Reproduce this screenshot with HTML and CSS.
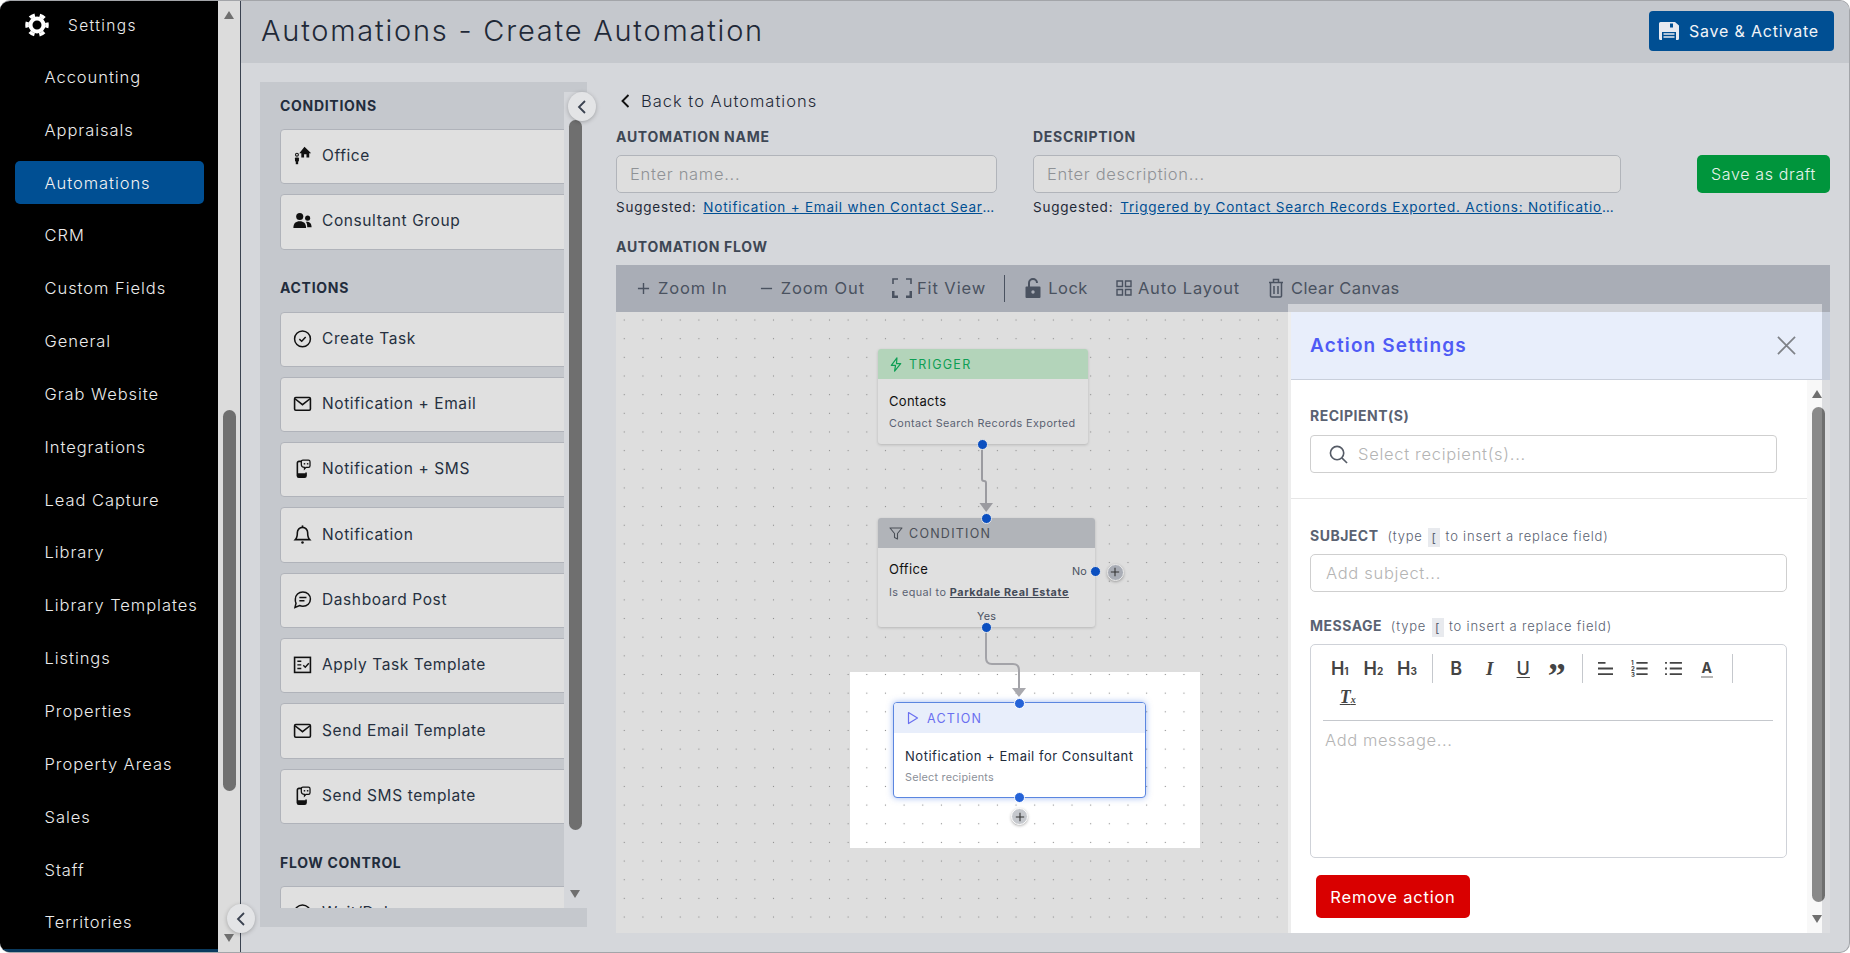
FILE: index.html
```html
<!DOCTYPE html>
<html lang="en">
<head>
    <meta charset="UTF-8">
    <meta name="viewport" content="width=device-width, initial-scale=1.0">
    <title>Automations - Create Automation</title>
    <link rel="stylesheet" href="styles.css">
</head>
<body>
    <svg class="defs" width="0" height="0">
        <symbol id="i-mail" viewBox="0 0 24 24"><rect x="2" y="4.500" width="20" height="16" rx="1.500" fill="none" stroke="currentColor" stroke-width="2"/><path d="M2.500 6l9.500 7.500L21.500 6" fill="none" stroke="currentColor" stroke-width="2"/></symbol>
        <symbol id="i-phone" viewBox="0 0 24 24"><path d="M11 3H7.500A2 2 0 0 0 5.500 5v16a2 2 0 0 0 2 2h7a2 2 0 0 0 2-2v-4" fill="none" stroke="currentColor" stroke-width="2"/><rect x="5.500" y="18" width="11" height="5" rx="1" fill="currentColor"/><path d="M12.500 1.500h7a2 2 0 0 1 2 2v5a2 2 0 0 1-2 2h-3l-2 2v-2a4 4 0 0 1-4-4v-3a2 2 0 0 1 2-2z" fill="none" stroke="currentColor" stroke-width="1.600"/><circle cx="14.500" cy="6" r="1.100" fill="currentColor"/><circle cx="18.500" cy="6" r="1.100" fill="currentColor"/></symbol>
        <symbol id="i-plus-sm" viewBox="0 0 12 12"><path d="M6 1v10M1 6h10" stroke="currentColor" stroke-width="1.300" fill="none"/></symbol>
    </svg>

    <div class="app">
        <!-- Sidebar -->
        <nav class="sidebar">
            <div class="nav-item nav-settings">
                <svg class="gear" viewBox="0 0 24 24"><circle cx="12" cy="12" r="6.500" fill="none" stroke="#fff" stroke-width="4"/><circle cx="12" cy="12" r="10" fill="none" stroke="#fff" stroke-width="3.500" stroke-dasharray="5.500 4.970" stroke-dashoffset="2.750"/></svg>
                <span>Settings</span>
            </div>
            <a class="nav-item">Accounting</a>
            <a class="nav-item">Appraisals</a>
            <a class="nav-item active">Automations</a>
            <a class="nav-item">CRM</a>
            <a class="nav-item">Custom Fields</a>
            <a class="nav-item">General</a>
            <a class="nav-item">Grab Website</a>
            <a class="nav-item">Integrations</a>
            <a class="nav-item">Lead Capture</a>
            <a class="nav-item">Library</a>
            <a class="nav-item">Library Templates</a>
            <a class="nav-item">Listings</a>
            <a class="nav-item">Properties</a>
            <a class="nav-item">Property Areas</a>
            <a class="nav-item">Sales</a>
            <a class="nav-item">Staff</a>
            <a class="nav-item">Territories</a>
            <div class="sidebar-foot"></div>
        </nav>
        <div class="side-track">
            <span class="arrow-up"></span>
            <span class="side-thumb"></span>
            <span class="arrow-down"></span>
            <button class="collapse-btn side-collapse"><svg viewBox="0 0 12 16"><path d="M9 2L3 8l6 6" fill="none" stroke="#3a4250" stroke-width="1.800"/></svg></button>
        </div>

        <main class="main">
            <header class="page-header">
                <h1>Automations - Create Automation</h1>
                <button class="btn-save">
                    <svg viewBox="0 0 20 18"><path d="M1.500 0H16l4 3.500v13a1.500 1.500 0 0 1-1.500 1.500h-17A1.500 1.500 0 0 1 0 16.500v-15A1.500 1.500 0 0 1 1.500 0z" fill="#e8eaf0"/><rect x="11" y="1.500" width="3" height="4" fill="#004f93"/><path d="M3 10h14v8H3z" fill="#004f93"/><path d="M4.500 12h11M4.500 15h11" stroke="#e8eaf0" stroke-width="1.300"/></svg>
                    Save &amp; Activate
                </button>
            </header>

            <div class="page-body">
                <!-- Step palette -->
                <aside class="palette">
                    <div class="palette-scroll">
                        <h3 class="palette-title first">CONDITIONS</h3>
                        <div class="step-card">
                            <svg class="step-icon" viewBox="0 0 24 24"><path d="M14.500 1L23 9h-2.500v5.500h-3.500v-4h-3v4h-3.500V9H8z" fill="currentColor"/><circle cx="5" cy="11" r="1.800" fill="none" stroke="currentColor" stroke-width="1.400"/><rect x="2.500" y="14.500" width="5" height="5" rx="1" fill="currentColor"/><rect x="3.500" y="19" width="3" height="4" fill="currentColor"/></svg>
                            Office
                        </div>
                        <div class="step-card">
                            <svg class="step-icon" viewBox="0 0 24 24"><circle cx="8.500" cy="7" r="4.500" fill="currentColor"/><path d="M0.500 21.500c0-6 3-8.500 8-8.500s8 2.500 8 8.500z" fill="currentColor"/><circle cx="18.500" cy="9" r="3.200" fill="currentColor"/><path d="M17 13.500c4 0 6.500 2 6.500 7h-5.500c0-3-.5-5-1.800-6.800z" fill="currentColor"/></svg>
                            Consultant Group
                        </div>

                        <h3 class="palette-title">ACTIONS</h3>
                        <div class="step-card">
                            <svg class="step-icon" viewBox="0 0 24 24"><circle cx="12" cy="12.500" r="10" fill="none" stroke="currentColor" stroke-width="1.900"/><path d="M8 12.800l3 2.700 5-5.500" fill="none" stroke="currentColor" stroke-width="1.800"/></svg>
                            Create Task
                        </div>
                        <div class="step-card">
                            <svg class="step-icon"><use href="#i-mail"/></svg>
                            Notification + Email
                        </div>
                        <div class="step-card">
                            <svg class="step-icon"><use href="#i-phone"/></svg>
                            Notification + SMS
                        </div>
                        <div class="step-card">
                            <svg class="step-icon" viewBox="0 0 24 24"><path d="M12 3a6.500 6.500 0 0 0-6.500 6.500c0 5-1 7.500-2.500 9h18c-1.500-1.500-2.500-4-2.500-9A6.500 6.500 0 0 0 12 3z" fill="none" stroke="currentColor" stroke-width="2"/><path d="M12 .5v2.500" stroke="currentColor" stroke-width="2"/><circle cx="12" cy="22" r="1.600" fill="currentColor"/></svg>
                            Notification
                        </div>
                        <div class="step-card">
                            <svg class="step-icon" viewBox="0 0 24 24"><path d="M12.500 2.500c5.500 0 9.500 3.800 9.500 9s-4 9-9.500 9c-1.500 0-3-.3-4.200-.9L2.500 22l1.300-5.200A8.800 8.800 0 0 1 3 11.500c0-5.200 4-9 9.500-9z" fill="none" stroke="currentColor" stroke-width="1.900"/><path d="M8 9.500h9M8 13.500h6.500" stroke="currentColor" stroke-width="1.800"/></svg>
                            Dashboard Post
                        </div>
                        <div class="step-card">
                            <svg class="step-icon" viewBox="0 0 24 24"><rect x="2" y="3" width="20" height="19" fill="none" stroke="currentColor" stroke-width="2"/><path d="M5.500 8h5M5.500 12.500h5M5.500 17h5" stroke="currentColor" stroke-width="1.800"/><path d="M13 13l2.500 2.500 4.500-5" fill="none" stroke="currentColor" stroke-width="1.800"/></svg>
                            Apply Task Template
                        </div>
                        <div class="step-card">
                            <svg class="step-icon"><use href="#i-mail"/></svg>
                            Send Email Template
                        </div>
                        <div class="step-card">
                            <svg class="step-icon"><use href="#i-phone"/></svg>
                            Send SMS template
                        </div>

                        <h3 class="palette-title last">FLOW CONTROL</h3>
                        <div class="step-card">
                            <svg class="step-icon" viewBox="0 0 24 24"><circle cx="12" cy="12.500" r="10" fill="none" stroke="currentColor" stroke-width="1.900"/><path d="M12 7v6l4 2" fill="none" stroke="currentColor" stroke-width="1.800"/></svg>
                            Wait/Delay
                        </div>
                    </div>
                    <div class="palette-bar">
                        <span class="palette-thumb"></span>
                        <span class="arrow-down"></span>
                    </div>
                    <button class="collapse-btn palette-collapse"><svg viewBox="0 0 12 16"><path d="M9 2L3 8l6 6" fill="none" stroke="#3a4250" stroke-width="1.800"/></svg></button>
                </aside>

                <section class="builder">
                    <a class="back-link">
                        <svg viewBox="0 0 10 16"><path d="M8.500 2L2.500 8l6 6" fill="none" stroke="#111" stroke-width="1.900"/></svg>
                        Back to Automations
                    </a>

                    <div class="form-row">
                        <div class="field">
                            <label class="field-label">AUTOMATION NAME</label>
                            <input class="field-input" placeholder="Enter name...">
                            <div class="suggest"><span>Suggested:</span><a>Notification + Email when Contact Search Records Exported</a></div>
                        </div>
                        <div class="field">
                            <label class="field-label">DESCRIPTION</label>
                            <input class="field-input" placeholder="Enter description...">
                            <div class="suggest"><span>Suggested:</span><a>Triggered by Contact Search Records Exported. Actions: Notification + Email for Consultant</a></div>
                        </div>
                        <button class="btn-draft">Save as draft</button>
                    </div>

                    <label class="field-label flow-label">AUTOMATION FLOW</label>

                    <div class="flow">
                        <div class="flow-tools">
                            <span class="tool tool-zoomin"><svg viewBox="0 0 14 14"><path d="M7 1v12M1 7h12" fill="none" stroke="currentColor" stroke-width="1.500"/></svg>Zoom In</span>
                            <span class="tool tool-zoomout"><svg viewBox="0 0 14 14"><path d="M1 7h12" fill="none" stroke="currentColor" stroke-width="1.500"/></svg>Zoom Out</span>
                            <span class="tool tool-fit"><svg viewBox="0 0 20 20"><path d="M1 6V1h5M14 1h5v5" fill="none" stroke="currentColor" stroke-width="1.600"/><path d="M1 13v6h5M14 19h5v-6" fill="none" stroke="currentColor" stroke-width="3"/></svg>Fit View</span>
                            <span class="tool-sep"></span>
                            <span class="tool tool-lock"><svg viewBox="0 0 16 20"><path d="M4 9V5a4 4 0 0 1 8 0" fill="none" stroke="currentColor" stroke-width="2"/><path d="M1.500 8.500h13a1 1 0 0 1 1 1V19a1 1 0 0 1-1 1h-13a1 1 0 0 1-1-1V9.500a1 1 0 0 1 1-1z" fill="currentColor"/><circle cx="8" cy="14" r="1.700" fill="#a9adb6"/></svg>Lock</span>
                            <span class="tool tool-layout"><svg viewBox="0 0 16 16"><path d="M1 1h5.500v5.500H1zM9.500 1H15v5.500H9.500zM1 9.500h5.500V15H1zM9.500 9.500H15V15H9.500z" fill="none" stroke="currentColor" stroke-width="1.400"/></svg>Auto Layout</span>
                            <span class="tool tool-trash"><svg viewBox="0 0 16 20"><path d="M1 4.500h14M5.500 4.500V1.500h5v3M2.500 4.500V18a1.500 1.500 0 0 0 1.500 1h8a1.500 1.500 0 0 0 1.500-1V4.500M6 8v8M10 8v8" fill="none" stroke="currentColor" stroke-width="1.500"/></svg>Clear Canvas</span>
                        </div>

                        <div class="canvas">
                            <div class="node-glow"></div>
                            <div class="canvas-dots"></div>

                            <svg class="edges" width="1214" height="621">
                                <path d="M366 136V167Q366 169 368 169Q370 169 370 171V193" fill="none" stroke="#9b9ba0" stroke-width="2"/>
                                <path d="M363.500 191H377L370.200 200Z" fill="#9b9ba0"/>
                                <path d="M370 318V346Q370 352 376 352H397Q403 352 403 358V378" fill="none" stroke="#a3a3a8" stroke-width="2"/>
                                <path d="M396 376H410L403 385Z" fill="#a9a9ae"/>
                            </svg>

                            <div class="node node-trigger">
                                <div class="node-head">
                                    <svg viewBox="0 0 14 16"><path d="M8 1L2 9h4.500L5.500 15l6.500-8H7.500z" fill="none" stroke="currentColor" stroke-width="1.300" stroke-linejoin="round"/></svg>
                                    TRIGGER
                                </div>
                                <div class="node-body">
                                    <div class="node-title">Contacts</div>
                                    <div class="node-sub">Contact Search Records Exported</div>
                                </div>
                                <span class="handle handle-bottom"></span>
                            </div>

                            <div class="node node-condition">
                                <div class="node-head">
                                    <svg viewBox="0 0 14 14"><path d="M1 1.500h12L8.500 7v5.500L5.500 11V7z" fill="none" stroke="currentColor" stroke-width="1.100" stroke-linejoin="round"/></svg>
                                    CONDITION
                                </div>
                                <div class="node-body">
                                    <div class="node-title">Office</div>
                                    <div class="node-sub">Is equal to <a>Parkdale Real Estate</a></div>
                                </div>
                                <span class="node-tag tag-no">No</span>
                                <span class="node-tag tag-yes">Yes</span>
                                <span class="handle handle-top"></span>
                                <span class="handle handle-right"></span>
                                <span class="handle handle-bottom"></span>
                                <span class="add-btn add-right"><svg><use href="#i-plus-sm"/></svg></span>
                            </div>

                            <div class="node node-action">
                                <div class="node-head">
                                    <svg viewBox="0 0 12 14"><path d="M1.500 1.500L10.500 7l-9 5.500z" fill="none" stroke="currentColor" stroke-width="1.200" stroke-linejoin="round"/></svg>
                                    ACTION
                                </div>
                                <div class="node-body">
                                    <div class="node-title">Notification + Email for Consultant</div>
                                    <div class="node-sub">Select recipients</div>
                                </div>
                                <span class="handle handle-top"></span>
                                <span class="handle handle-bottom"></span>
                                <span class="add-btn add-below"><svg><use href="#i-plus-sm"/></svg></span>
                            </div>
                        </div>

                        <!-- Action settings drawer -->
                        <div class="drawer">
                            <div class="drawer-strip"></div>
                            <div class="drawer-head">
                                <h2>Action Settings</h2>
                                <svg class="drawer-close" viewBox="0 0 20 20"><path d="M1 1l18 18M19 1L1 19" fill="none" stroke="#7f8288" stroke-width="1.800"/></svg>
                            </div>
                            <div class="drawer-body">
                                <div class="drawer-section">
                                    <label class="drawer-label">RECIPIENT(S)</label>
                                    <div class="search-box">
                                        <svg viewBox="0 0 20 20"><circle cx="8.500" cy="8.500" r="7" fill="none" stroke="#555b66" stroke-width="1.700"/><path d="M13.500 13.500L19 19" stroke="#555b66" stroke-width="1.700"/></svg>
                                        <input placeholder="Select recipient(s)...">
                                    </div>
                                </div>
                                <div class="drawer-section">
                                    <label class="drawer-label">SUBJECT <span class="hint">(type <kbd>[</kbd> to insert a replace field)</span></label>
                                    <input class="drawer-input" placeholder="Add subject...">
                                    <label class="drawer-label message-label">MESSAGE <span class="hint">(type <kbd>[</kbd> to insert a replace field)</span></label>
                                    <div class="editor">
                                        <div class="editor-tools">
                                            <div class="tools-row">
                                                <span class="ql">H<sub>1</sub></span>
                                                <span class="ql">H<sub>2</sub></span>
                                                <span class="ql">H<sub>3</sub></span>
                                                <span class="ql-sep"></span>
                                                <span class="ql">B</span>
                                                <span class="ql ql-i">I</span>
                                                <span class="ql ql-u">U</span>
                                                <span class="ql ql-q">”</span>
                                                <span class="ql-sep"></span>
                                                <span class="ql"><svg viewBox="0 0 18 16"><path d="M1 2h8M1 8h16M1 14h16" stroke="currentColor" stroke-width="2"/></svg></span>
                                                <span class="ql ql-list"><small class="list-nums">1<br>2<br>3</small><svg viewBox="0 0 12 16"><path d="M0 2h12M0 8h12M0 14h12" stroke="currentColor" stroke-width="2"/></svg></span>
                                                <span class="ql"><svg viewBox="0 0 18 16"><path d="M5 2h13M5 8h13M5 14h13" stroke="currentColor" stroke-width="2"/><path d="M0 2h2M0 8h2M0 14h2" stroke="currentColor" stroke-width="2"/></svg></span>
                                                <span class="ql ql-a"><span class="ql-a-letter">A</span></span>
                                                <span class="ql-sep"></span>
                                            </div>
                                            <div class="tools-row tools-second">
                                                <span class="ql ql-clear">T<sub>x</sub></span>
                                            </div>
                                        </div>
                                        <div class="editor-area">Add message...</div>
                                    </div>
                                    <button class="btn-remove">Remove action</button>
                                </div>
                            </div>
                            <div class="drawer-bar">
                                <span class="arrow-up"></span>
                                <span class="drawer-thumb"></span>
                                <span class="arrow-down"></span>
                            </div>
                        </div>
                    </div>
                </section>
            </div>
        </main>
    </div>
</body>
</html>
```

FILE: styles.css
```css
* {
    margin: 0;
    padding: 0;
    box-sizing: border-box;
}

html, body {
    width: 1850px;
    height: 953px;
    overflow: hidden;
    background: #fff;
}

body {
    font-family: Inter, "Noto Sans", sans-serif;
    color: #222c3c;
}

.defs {
    position: absolute;
}

.app {
    width: 1850px;
    height: 953px;
    display: flex;
    border: 1px solid #a3a5a9;
    border-left-width: 0;
    border-radius: 10px;
    overflow: hidden;
    background: #d5d7db;
}

/* Sidebar */
.sidebar {
    width: 218px;
    flex: none;
    background: #000;
    display: flex;
    flex-direction: column;
    gap: 10px;
    padding: 1.600px 14px 0 15px;
    position: relative;
}

.nav-item {
    height: 42.850px;
    flex: none;
    display: flex;
    align-items: center;
    padding-left: 29.500px;
    color: #ececec;
    font-size: 16.500px;
    font-weight: 300;
    letter-spacing: 0.950px;
    border-radius: 5px;
}

.nav-item.active {
    background: #004f93;
    color: #f2f2f2;
}

.nav-settings {
    padding: 2px 0 0 10px;
    gap: 19px;
    font-size: 15.500px;
    letter-spacing: 1.400px;
}

.gear {
    width: 24px;
    height: 24px;
}

.sidebar-foot {
    position: absolute;
    left: 0;
    right: 0;
    bottom: 0;
    height: 3px;
    background: #0a3a5e;
}

.side-track {
    width: 23px;
    flex: none;
    background: #dcdcdc;
    border-right: 1px solid #3a4250;
    position: relative;
}

.side-thumb {
    position: absolute;
    left: 5px;
    top: 409px;
    width: 13px;
    height: 381px;
    background: #6f6f6f;
    border-radius: 7px;
}

.arrow-up,
.arrow-down {
    position: absolute;
    width: 0;
    height: 0;
    border-left: 5.500px solid transparent;
    border-right: 5.500px solid transparent;
}

.arrow-up {
    border-bottom: 8px solid #6f6f6f;
}

.arrow-down {
    border-top: 8px solid #6f6f6f;
}

.side-track .arrow-up {
    left: 6px;
    top: 10px;
}

.side-track .arrow-down {
    left: 6px;
    top: 933px;
}

.collapse-btn {
    position: absolute;
    width: 28px;
    height: 29px;
    border: none;
    border-radius: 50%;
    background: #e3e4e6;
    box-shadow: 0 1px 4px rgba(0, 0, 0, 0.25);
    display: flex;
    align-items: center;
    justify-content: center;
    z-index: 3;
}

.collapse-btn svg {
    width: 12px;
    height: 16px;
}

.side-collapse {
    left: 9px;
    top: 903px;
}

/* Main */
.main {
    flex: 1;
    display: flex;
    flex-direction: column;
    min-width: 0;
}

.page-header {
    height: 62px;
    flex: none;
    background: #c5c8cd;
    display: flex;
    align-items: center;
    justify-content: space-between;
    padding: 0 15px 2px 20px;
}

.page-header h1 {
    font-size: 29px;
    font-weight: 300;
    letter-spacing: 1.770px;
    color: #1f2937;
    padding-bottom: 2px;
}

.btn-save {
    width: 185px;
    height: 40px;
    border: none;
    border-radius: 4px;
    background: #004f93;
    color: #f2f4f8;
    font: 400 16px Inter, sans-serif;
    letter-spacing: 0.800px;
    display: flex;
    align-items: center;
    gap: 10px;
    padding-left: 10px;
}

.btn-save svg {
    width: 20px;
    height: 18px;
}

.page-body {
    flex: 1;
    display: flex;
    padding-left: 19px;
    min-height: 0;
}

/* Step palette */
.palette {
    width: 327px;
    height: 845px;
    margin-top: 19px;
    flex: none;
    background: #c5c8cd;
    position: relative;
    display: flex;
    align-items: flex-start;
}

.palette-scroll {
    width: 304px;
    height: 826px;
    overflow: hidden;
    padding-left: 20px;
    flex: none;
}

.palette-title {
    font-size: 14px;
    font-weight: 700;
    letter-spacing: 0.700px;
    color: #222c3c;
    line-height: 18px;
    margin: 29px 0 15px;
}

.palette-title.first {
    margin: 15px 0 14px;
}

.palette-title.last {
    margin: 30px 0 14px;
}

.step-card {
    width: 300px;
    height: 55.300px;
    margin-bottom: 10px;
    background: #e0e0e0;
    border: 1px solid #b0b3ba;
    border-radius: 4px;
    display: flex;
    align-items: center;
    gap: 10px;
    padding: 0 0 2px 12px;
    font-size: 15.500px;
    font-weight: 400;
    letter-spacing: 0.600px;
    color: #26303f;
}

.step-icon {
    width: 19px;
    height: 19px;
    flex: none;
    color: #111;
}

.palette-bar {
    width: 23px;
    height: 816px;
    margin-top: 10px;
    background: #d5d7db;
    position: relative;
}

.palette-thumb {
    position: absolute;
    left: 5px;
    top: 28px;
    width: 13px;
    height: 710px;
    background: #6f6f6f;
    border-radius: 7px;
}

.palette-bar .arrow-down {
    left: 6px;
    top: 798px;
}

.palette-collapse {
    left: 308px;
    top: 10px;
}

/* Builder column */
.builder {
    width: 1214px;
    margin-left: 29px;
    flex: none;
    display: flex;
    flex-direction: column;
}

.back-link {
    height: 24px;
    margin-top: 26px;
    display: flex;
    align-items: center;
    gap: 11px;
    padding-left: 4px;
    font-size: 16.500px;
    font-weight: 300;
    letter-spacing: 1px;
    color: #1f2937;
}

.back-link svg {
    width: 10px;
    height: 16px;
}

.form-row {
    display: grid;
    grid-template-columns: 381px 588px 133px;
    column-gap: 36px;
    margin-top: 15px;
}

.field {
    min-width: 0;
}

.field-label {
    display: block;
    font-size: 14px;
    font-weight: 700;
    line-height: 18px;
    letter-spacing: 0.700px;
    color: #3e4755;
}

.field-input {
    display: block;
    width: 100%;
    height: 38px;
    margin-top: 9px;
    padding: 0 13px;
    background: #dedede;
    border: 1px solid #b1b4ba;
    border-radius: 5px;
    font: 300 16.500px Inter, sans-serif;
    letter-spacing: 0.700px;
}

.field-input::placeholder {
    color: #8f9296;
}

.suggest {
    height: 18px;
    margin-top: 5px;
    display: flex;
    align-items: center;
    gap: 7px;
    font-size: 13.500px;
    font-weight: 400;
    letter-spacing: 0.780px;
    color: #1f2937;
    white-space: nowrap;
}

.suggest a {
    flex: 1;
    min-width: 0;
    overflow: hidden;
    text-overflow: ellipsis;
    color: #004f93;
    text-decoration: underline;
}

.btn-draft {
    width: 133px;
    height: 38px;
    margin: 27px 0 0 40px;
    border: none;
    border-radius: 5px;
    background: #00953c;
    color: #e8f4ec;
    font: 300 16px Inter, sans-serif;
    letter-spacing: 0.650px;
}

.flow-label {
    margin-top: 22px;
}

.flow {
    margin-top: 9px;
    position: relative;
    display: flex;
    flex-direction: column;
}

.flow-tools {
    height: 47px;
    background: #a9adb6;
    position: relative;
    color: #4a5260;
    font-size: 16.500px;
    font-weight: 400;
    letter-spacing: 0.900px;
    display: flex;
    align-items: center;
    padding: 0 0 1px 21px;
}

.tool {
    display: flex;
    align-items: center;
}

.tool svg {
    flex: none;
}

.tool-zoomin { gap: 8px; }
.tool-zoomin svg { width: 13px; height: 13px; }

.tool-zoomout { gap: 8px; margin-left: 32px; }
.tool-zoomout svg { width: 13px; height: 13px; }

.tool-fit { gap: 5px; margin-left: 27px; }
.tool-fit svg { width: 20px; height: 20px; }

.tool-sep {
    width: 1px;
    height: 27px;
    background: #4a5260;
    margin-left: 18px;
}

.tool-lock { gap: 7px; margin-left: 20px; letter-spacing: 0.500px; }
.tool-lock svg { width: 16px; height: 20px; }

.tool-layout { gap: 6px; margin-left: 28px; letter-spacing: 0.800px; }
.tool-layout svg { width: 16px; height: 16px; }

.tool-trash { gap: 7px; margin-left: 28px; letter-spacing: 0.400px; }
.tool-trash svg { width: 16px; height: 20px; }

/* Canvas */
.canvas {
    height: 621px;
    background: #dedede;
    position: relative;
    overflow: hidden;
}

.canvas-dots {
    position: absolute;
    inset: 0;
    background-image: radial-gradient(circle, #8c8c8c 0.7px, transparent 1px);
    background-size: 18.670px 18.670px;
    background-position: -1.070px -1.300px;
}

.node-glow {
    position: absolute;
    left: 234px;
    top: 360px;
    width: 350px;
    height: 176px;
    background: #fff;
}

.edges {
    position: absolute;
    left: 0;
    top: 0;
}

.node {
    position: absolute;
    border-radius: 3px;
    background: #e0e0e0;
    box-shadow: 0 1px 3px rgba(0, 0, 0, 0.18);
}

.node-head {
    height: 30px;
    display: flex;
    align-items: center;
    gap: 6px;
    padding-left: 11px;
    font-size: 12.500px;
    font-weight: 400;
    letter-spacing: 1.250px;
    border-radius: 3px 3px 0 0;
}

.node-head svg {
    width: 14px;
    height: 15px;
    flex: none;
}

.node-body {
    padding: 14px 11px 0;
}

.node-title {
    font-size: 13px;
    line-height: 18px;
    letter-spacing: 0.300px;
    color: #111;
}

.node-sub {
    font-size: 10.800px;
    line-height: 14px;
    margin-top: 6px;
    letter-spacing: 0.440px;
    color: #5a6272;
    white-space: nowrap;
}

.node-sub a {
    font-weight: 700;
    text-decoration: underline;
    color: #444b58;
    letter-spacing: 0.600px;
}

.node-trigger {
    left: 262px;
    top: 37px;
    width: 210px;
    height: 95px;
}

.node-trigger .node-head {
    background: #b3d4ba;
    color: #0e9f55;
}

.node-trigger .node-body {
    padding-top: 13px;
}

.node-trigger .node-sub {
    margin-top: 7px;
}

.node-condition {
    left: 262px;
    top: 206px;
    width: 217px;
    height: 109px;
}

.node-condition .node-head {
    background: #b1b4b9;
    color: #4a4f57;
}

.node-condition .node-body {
    padding-top: 12px;
}

.node-condition .node-sub {
    margin-top: 8px;
}

.node-action {
    left: 277px;
    top: 390px;
    width: 253px;
    height: 96px;
    background: #fff;
    border: 1.500px solid #5b86e0;
    border-radius: 4px;
    box-shadow: 0 0 6px rgba(70, 120, 230, 0.5);
}

.node-action .node-head {
    background: #e8eefb;
    color: #6a6ff0;
    gap: 8px;
    padding-left: 13px;
}

.node-action .node-head svg {
    width: 12px;
    height: 14px;
}

.node-action .node-title {
    color: #222c3c;
    letter-spacing: 0.520px;
}

.node-action .node-sub {
    color: #8b8f98;
    letter-spacing: 0.240px;
}

.handle {
    position: absolute;
    width: 11px;
    height: 11px;
    border-radius: 50%;
    background: #0b4fc0;
    border: 1px solid #e8e8e8;
}

.handle-bottom {
    left: 50%;
    bottom: -5.500px;
    margin-left: -5.500px;
}

.handle-top {
    left: 50%;
    top: -5.500px;
    margin-left: -5.500px;
}

.handle-right {
    right: -6px;
    top: 48px;
}

.node-trigger .handle-bottom {
    margin-left: -6px;
}

.node-action .handle {
    background: #2563d8;
    border-color: #fff;
}

.node-tag {
    position: absolute;
    font-size: 10.800px;
    letter-spacing: 0.200px;
    color: #4a5260;
}

.tag-no {
    right: 8px;
    top: 47px;
}

.tag-yes {
    left: 50%;
    bottom: 4px;
    transform: translateX(-50%);
}

.add-btn {
    position: absolute;
    width: 17px;
    height: 17px;
    border-radius: 50%;
    border: 1.500px solid #ececec;
    box-shadow: 0 1px 3px rgba(0, 0, 0, 0.3);
    display: flex;
    align-items: center;
    justify-content: center;
    color: #333;
}

.add-btn svg {
    width: 10px;
    height: 10px;
}

.add-right {
    background: #a9adb6;
    right: -28.500px;
    top: 45.500px;
}

.add-below {
    background: #c5c8cd;
    left: 50%;
    margin-left: -8.500px;
    bottom: -28px;
    border-color: #fff;
}

/* Action settings drawer */
.drawer {
    position: absolute;
    left: 672px;
    top: 39px;
    bottom: 0;
    width: 534px;
    padding: 8px 0 0 3px;
    background: rgba(255, 255, 255, 0.45);
    display: flex;
    flex-direction: column;
}

.drawer-strip {
    position: absolute;
    left: 100%;
    top: 8px;
    bottom: 0;
    width: 8px;
    background: #dcdde0;
    border-top: 68px solid #c7cedb;
}

.drawer-head {
    height: 68px;
    flex: none;
    background: #e8eefb;
    border-bottom: 1px solid #c9cfdb;
    display: flex;
    align-items: center;
    justify-content: space-between;
    padding: 0 26px 0 19px;
}

.drawer-head h2 {
    font-size: 19px;
    font-weight: 600;
    letter-spacing: 1.150px;
    color: #4f5bf5;
}

.drawer-close {
    width: 19px;
    height: 19px;
}

.drawer-body {
    flex: 1;
    background: #fff;
    margin-right: 15px;
}

.drawer-section {
    padding: 28px 0 0 19px;
}

.drawer-section:first-child {
    height: 119px;
    padding-top: 27px;
    border-bottom: 1px solid #e6e6e6;
}

.drawer-label {
    display: block;
    height: 18px;
    font-size: 14px;
    font-weight: 700;
    line-height: 18px;
    letter-spacing: 0.500px;
    color: #5a6272;
}

.hint {
    font-size: 13px;
    font-weight: 300;
    letter-spacing: 0.800px;
    color: #5a6272;
    margin-left: 5px;
}

kbd {
    display: inline-block;
    width: 12px;
    height: 19px;
    margin: 0 1px;
    text-align: center;
    background: #e8eaee;
    font: 400 12px/20px Inter, sans-serif;
    vertical-align: middle;
}

.search-box {
    width: 467px;
    height: 38px;
    margin-top: 10px;
    border: 1px solid #cfcfcf;
    border-radius: 4px;
    display: flex;
    align-items: center;
    gap: 10px;
    padding-left: 18px;
    background: #fff;
}

.search-box svg {
    width: 19px;
    height: 19px;
    flex: none;
}

.search-box input {
    flex: 1;
    border: none;
    outline: none;
    background: none;
    font: 300 16.500px Inter, sans-serif;
    letter-spacing: 0.700px;
}

.search-box input::placeholder,
.drawer-input::placeholder {
    color: #b4b4b4;
}

.drawer-input {
    display: block;
    width: 477px;
    height: 38px;
    margin-top: 9px;
    padding: 0 15px;
    border: 1px solid #cfcfcf;
    border-radius: 5px;
    font: 300 16.500px Inter, sans-serif;
    letter-spacing: 0.700px;
}

.message-label {
    margin-top: 25px;
}

.editor {
    width: 477px;
    height: 214px;
    margin-top: 9px;
    border: 1px solid #cfd2d8;
    border-radius: 5px;
    padding: 9px 13px 0 12px;
}

.editor-tools {
    height: 67px;
    border-bottom: 1px solid #c5c8cd;
}

.tools-row {
    display: flex;
    align-items: center;
    height: 29px;
}

.tools-second {
    height: 27px;
    margin-top: 1px;
    padding-left: 8px;
}

.ql {
    width: 33.600px;
    height: 29px;
    display: flex;
    align-items: center;
    justify-content: center;
    font-size: 18px;
    font-weight: 600;
    color: #444;
}

.ql sub {
    font-size: 10px;
    font-weight: 700;
    line-height: 1;
    vertical-align: baseline;
    margin-top: 5px;
}

.ql svg {
    width: 17px;
    height: 15px;
}

.ql-i {
    font-style: italic;
    font-family: "Liberation Serif", serif;
    font-size: 19px;
}

.ql-u {
    text-decoration: underline;
    text-underline-offset: 2px;
    font-weight: 500;
}

.ql-q {
    font-family: "Liberation Serif", serif;
    font-size: 36px;
    font-weight: 700;
    padding-top: 14px;
}

.ql-list {
    gap: 1px;
}

.ql-list svg {
    width: 12px;
}

.list-nums {
    font-size: 6px;
    line-height: 6px;
    font-weight: 700;
}

.ql-a-letter {
    font-size: 14px;
    font-weight: 700;
    line-height: 15px;
    padding: 0 1px 1px;
    border-bottom: 2px solid #b5b5b5;
}

.ql-clear {
    font-family: "Liberation Serif", serif;
    font-style: italic;
    text-decoration: underline;
    font-size: 18px;
}

.ql-sep {
    width: 1px;
    height: 29px;
    background: #c5c8cd;
    margin: 0 6px 0 8.500px;
    flex: none;
}

.editor-area {
    padding: 9px 2px;
    font-size: 16.500px;
    font-weight: 300;
    letter-spacing: 0.600px;
    color: #b4b4b4;
}

.btn-remove {
    display: block;
    width: 154px;
    height: 43px;
    margin: 17px 0 0 6px;
    border: none;
    border-radius: 5px;
    background: #d90000;
    color: #fff;
    font: 400 16.500px Inter, sans-serif;
    letter-spacing: 0.800px;
}

.drawer-bar {
    position: absolute;
    right: 0;
    top: 76px;
    bottom: 0;
    width: 15px;
    background: #f8f8f8;
}

.drawer-thumb {
    position: absolute;
    left: 5px;
    top: 27px;
    width: 13px;
    height: 495px;
    background: linear-gradient(to right, #8a8a8a 10px, #6f6f6f 10px);
    border-radius: 7px;
    z-index: 1;
}

.drawer-bar .arrow-up {
    left: 5px;
    top: 10px;
}

.drawer-bar .arrow-down {
    left: 5px;
    top: 535px;
}
```
